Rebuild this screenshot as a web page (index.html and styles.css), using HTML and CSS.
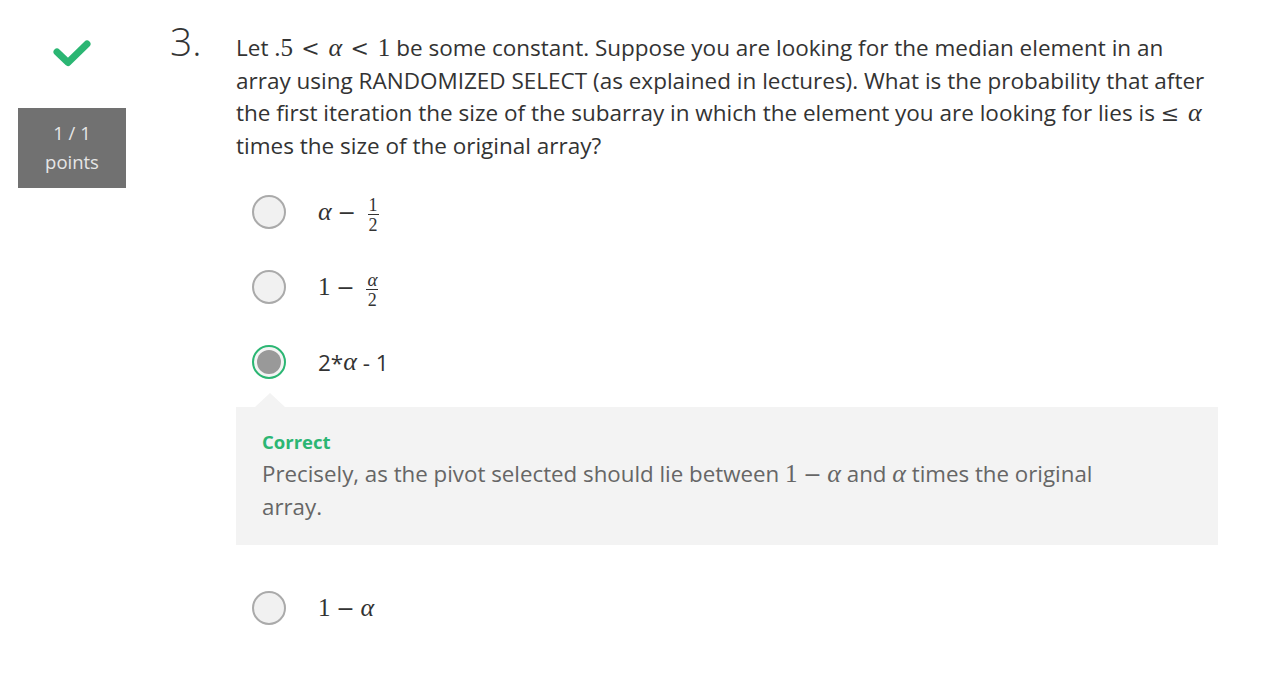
FILE: index.html
```html
<!DOCTYPE html>
<html lang="en">
<head>
<meta charset="utf-8">
<title>Question 3</title>
<link rel="stylesheet" href="styles.css">
</head>
<body>
<div class="page">
  <aside class="status">
    <svg class="check" width="40" height="30" viewBox="0 0 40 30" aria-hidden="true">
      <path d="M5 13 L16 23.5 L35 5" fill="none" stroke="#2bb673" stroke-width="7" stroke-linecap="round" stroke-linejoin="round"/>
    </svg>
    <div class="points">1 / 1<br>points</div>
  </aside>
  <main class="question">
    <div class="q-head">
      <div class="q-num">3.</div>
      <div class="q-text">Let <span class="m">.5<span class="rel">&lt;</span><i>α</i><span class="rel">&lt;</span>1</span> be some constant. Suppose you are looking for the median element in an array using RANDOMIZED SELECT (as explained in lectures). What is the probability that after the first iteration the size of the subarray in which the element you are looking for lies is <span class="m"><span class="rel first">≤</span><i>α</i></span> times the size of the original array?</div>
    </div>
    <div class="options">
      <div class="option">
        <span class="radio"></span>
        <span class="opt-label m"><i>α</i><span class="bin">−</span><span class="frac"><span class="num">1</span><span class="den">2</span></span></span>
      </div>
      <div class="option">
        <span class="radio"></span>
        <span class="opt-label m">1<span class="bin">−</span><span class="frac"><span class="num"><i>α</i></span><span class="den">2</span></span></span>
      </div>
      <div class="option">
        <span class="radio selected"><span class="dot"></span></span>
        <span class="opt-label plain">2*<i class="m">α</i> - 1</span>
      </div>
      <div class="feedback">
        <div class="fb-title">Correct</div>
        <div class="fb-text">Precisely, as the pivot selected should lie between <span class="m">1<span class="bin">−</span><i>α</i></span> and <i class="m">α</i> times the original array.</div>
      </div>
      <div class="option last">
        <span class="radio"></span>
        <span class="opt-label m">1<span class="bin">−</span><i>α</i></span>
      </div>
    </div>
  </main>
</div>
</body>
</html>
```

FILE: styles.css
```css
html, body {
  margin: 0;
  padding: 0;
  background: #ffffff;
}

body {
  font-family: "Open Sans", "Noto Sans", sans-serif;
  color: #333333;
}

.page {
  display: flex;
  align-items: flex-start;
  padding: 25px 0 0 18px;
}

.status {
  width: 108px;
  display: flex;
  flex-direction: column;
  align-items: center;
  padding-top: 14px;
}

.check {
  display: block;
}

.points {
  margin-top: 39px;
  width: 108px;
  height: 80px;
  box-sizing: border-box;
  padding-top: 10px;
  background: #717171;
  color: #e6e6e6;
  font-size: 18.5px;
  line-height: 29px;
  text-align: center;
}

.question {
  margin-left: 42px;
  width: 1050px;
}

.q-head {
  display: flex;
  align-items: baseline;
}

.q-num {
  width: 68px;
  flex: none;
  padding-left: 2px;
  box-sizing: border-box;
  font-size: 39px;
  font-weight: 300;
  line-height: 32px;
  color: #333333;
}

.q-text {
  width: 982px;
  font-size: 22.5px;
  line-height: 32px;
  color: #333333;
}

.m {
  font-family: "Liberation Serif", "DejaVu Serif", serif;
  font-size: 25px;
}

.m i, i.m {
  font-family: "Liberation Serif", "DejaVu Serif", serif;
  font-style: italic;
  font-size: 26px;
}

.rel {
  font-family: "DejaVu Serif", serif;
  font-size: 22px;
  margin: 0 0.4em 0 0.38em;
}

.rel.first {
  margin-left: 0;
}

.bin {
  font-family: "DejaVu Serif", serif;
  font-size: 22px;
  margin: 0 0.26em;
}

.options {
  margin-top: 25px;
  margin-left: 84px;
  display: flex;
  flex-direction: column;
  gap: 25px;
}

.option {
  display: flex;
  align-items: center;
  height: 50px;
}

.option.last {
  margin-top: 13px;
}

.radio {
  flex: none;
  width: 34px;
  height: 34px;
  box-sizing: border-box;
  border: 2px solid #aaaaaa;
  border-radius: 50%;
  background: #f1f1f1;
  display: flex;
  align-items: center;
  justify-content: center;
}

.radio.selected {
  border-color: #2bb673;
  background: #f4f4f4;
}

.dot {
  width: 24px;
  height: 24px;
  border-radius: 50%;
  background: #999999;
}

.opt-label {
  margin-left: 32px;
  color: #333333;
  display: inline-flex;
  align-items: center;
  white-space: pre;
}

.opt-label.plain {
  font-size: 22.5px;
}

.frac {
  display: inline-flex;
  flex-direction: column;
  align-items: center;
  font-size: 18px;
  line-height: 16px;
  padding-top: 5px;
  margin-left: 6px;
}

.frac i {
  font-size: 19px;
}

.frac .num {
  border-bottom: 1px solid #333333;
  padding: 0 1px 1px;
}

.frac .den {
  padding-top: 2px;
}

.feedback {
  position: relative;
  margin-left: -16px;
  margin-top: -5px;
  width: 982px;
  box-sizing: border-box;
  background: #f3f3f3;
  padding: 23px 90px 22px 26px;
}

.feedback::before {
  content: "";
  position: absolute;
  top: -14px;
  left: 19px;
  border-left: 15px solid transparent;
  border-right: 15px solid transparent;
  border-bottom: 14px solid #f3f3f3;
}

.fb-title {
  color: #2bb673;
  font-weight: 700;
  font-size: 18.5px;
  line-height: 24px;
}

.fb-text {
  margin-top: 4px;
  color: #666666;
  font-size: 22.3px;
  line-height: 32px;
}
```
